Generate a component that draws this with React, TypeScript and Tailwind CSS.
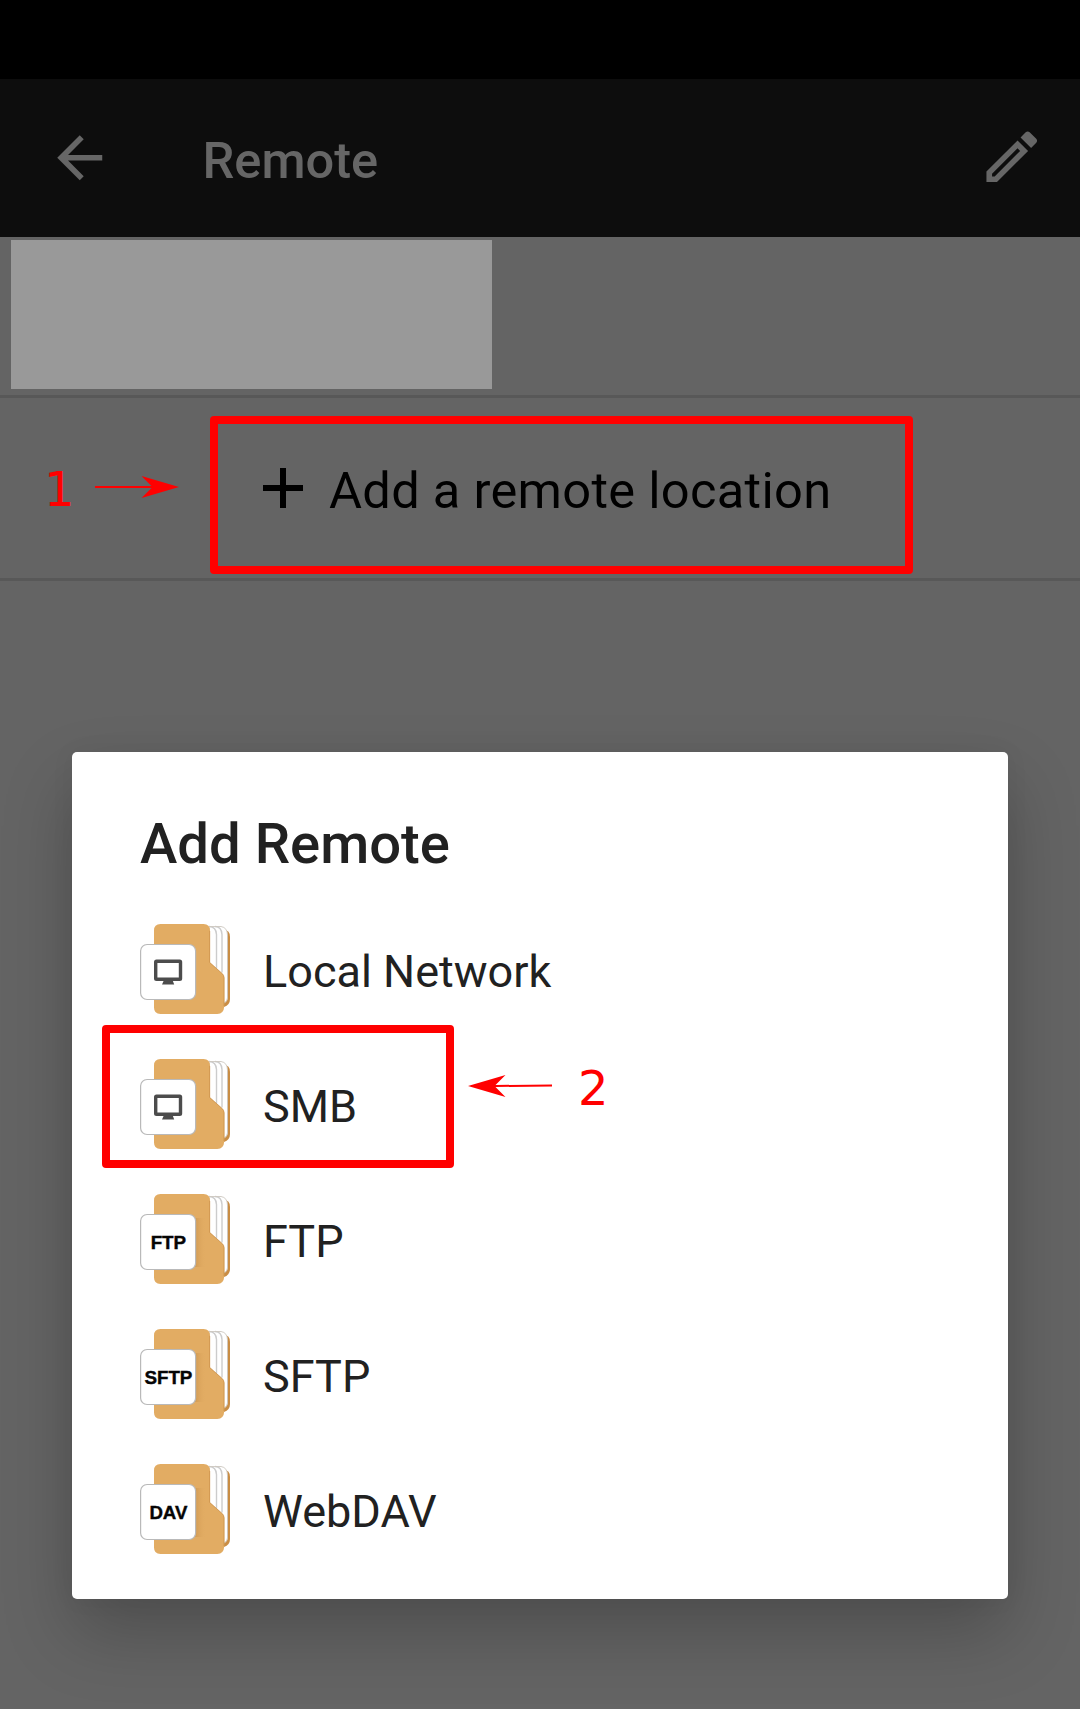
import React from "react";

function FolderIcon({ label }: { label?: string }) {
  const id = label ? "shade-" + label : "shade-screen";
  const width = label === "SFTP" ? 48 : label === "DAV" ? 38 : 35.5;
  return (
    <svg className="block h-[110px] w-[110px] shrink-0" viewBox="0 0 110 110">
      <defs>
        <linearGradient id={id} x1="0" x2="1" y1="0" y2="0">
          <stop offset="0" stopColor="#a86f2c" stopOpacity="0.3" />
          <stop offset="1" stopColor="#e2ac63" stopOpacity="0" />
        </linearGradient>
      </defs>
      <path d="M60 15h34q6 0 6 7v62q0 6-6 8H60z" fill="#c98d44" />
      <path d="M72 11.5h18.500q7 1 7 8V83q0 4-5 6H72z" fill="#fff" />
      <path d="M79 11.500q7 0 7.500 8v34M85 11.500q6.500 0 7 8v38" fill="none" stroke="#cccccc" strokeWidth="1.4" />
      <path d="M79 11.500h12q6.500 1 6.500 9V83q0 3-3.500 5" fill="none" stroke="#cdc7bf" strokeWidth="0.9" />
      <path
        d="M30.500 9H73.500q6.500 0 6.500 6.500V47.500L92.800 59q1.500 1.800 1.500 4V91q-.5 8-7 8H30.500q-6.500 0-6.500-6.500V15.500Q24 9 30.500 9z"
        fill="#e2ac63"
      />
      <path d="M79.700 16V47.500L92.300 58.700q1.700 1.600 1.700 4V91" fill="none" stroke="#cc924c" strokeWidth="0.8" />
      {label && <rect x="65" y="33" width="11" height="49" fill={`url(#${id})`} />}
      <rect x="10.600" y="29.500" width="55" height="55" rx="6.500" fill="#fff" stroke="#b9b9b9" strokeWidth="1.200" />
      {label ? (
        <text
          x={38.400}
          y={64.300}
          textAnchor="middle"
          textLength={width}
          lengthAdjust="spacingAndGlyphs"
          fill="#050505"
          stroke="#050505"
          strokeWidth="0.4"
          className="font-['Liberation_Sans',sans-serif] text-[19px] font-bold"
        >
          {label}
        </text>
      ) : (
        <>
          <rect x="25.700" y="46.200" width="24.800" height="18" rx="0.8" fill="#fff" stroke="#4c4c4c" strokeWidth="3.400" />
          <path d="M34 65h8.500l1.700 4.500H32z" fill="#4c4c4c" />
        </>
      )}
    </svg>
  );
}

const remotes = [
  { name: "Local Network" },
  { name: "SMB" },
  { name: "FTP", badge: "FTP" },
  { name: "SFTP", badge: "SFTP" },
  { name: "WebDAV", badge: "DAV" },
];

export default function App() {
  return (
    <div className="relative flex h-[1709px] w-[1080px] flex-col overflow-hidden bg-[#646464] font-['Roboto',sans-serif]">
      <div className="h-[79px] bg-black" />
      <header className="flex h-[158px] items-center gap-[89px] bg-[#0d0d0d] pr-[35px] pl-[46px] text-[#666666]">
        <svg className="block size-[67.5px]" viewBox="0 0 24 24" fill="currentColor">
          <path d="M20 11H7.830l5.590-5.590L12 4l-8 8 8 8 1.410-1.410L7.830 13H20v-2z" />
        </svg>
        <h1 className="flex-1 pt-[5px] text-[50.6px] leading-[60px] font-medium">Remote</h1>
        <svg className="mb-[3px] block size-[67.5px]" viewBox="0 0 24 24" fill="currentColor">
          <path d="M3 17.250V21h3.750L17.810 9.940l-3.750-3.750L3 17.250zM5.920 19H5v-.92l9.060-9.060.92.92L5.920 19zM20.710 5.630l-2.340-2.340c-.2-.2-.45-.29-.71-.29s-.51.1-.7.29l-1.830 1.830 3.750 3.750 1.830-1.830c.39-.39.39-1.020 0-1.410z" />
        </svg>
      </header>
      <div className="flex h-[161px] items-start border-b-[3px] border-[#585858] pt-[3px] pl-[11px]">
        <div className="h-[149px] w-[480.5px] bg-[#999999]" />
      </div>
      <div className="flex h-[183px] items-center gap-[26px] border-b-[3px] border-[#585858] pl-[263px] text-black">
        <svg className="block size-10" viewBox="0 0 40 40" fill="currentColor">
          <path d="M17 0h6v17h17v6H23v17h-6V23H0v-6h17z" />
        </svg>
        <span className="pt-[5px] text-[50.6px] leading-[60px] tracking-[0.3px] whitespace-nowrap">Add a remote location</span>
      </div>

      <div className="absolute inset-0 flex items-end justify-center pb-[110px]">
        <div className="flex h-[847px] w-[936px] flex-col rounded-[5px] bg-white px-[58px] pt-[57px] text-[#212121] shadow-[0_34px_70px_rgba(0,0,0,0.22),0_0_24px_rgba(0,0,0,0.05)]">
          <h2 className="h-[106px] pl-[10px] text-[56.25px] leading-[70px] font-medium">Add Remote</h2>
          <ul className="flex flex-col">
            {remotes.map((r) => (
              <li key={r.name} className="flex h-[135px] items-start gap-[23px]">
                <FolderIcon label={r.badge} />
                <span className="pt-[27px] text-[45px] leading-[60px] whitespace-nowrap">{r.name}</span>
              </li>
            ))}
          </ul>
        </div>
      </div>

      <div className="absolute top-[416px] left-[210px] h-[158px] w-[703px] rounded-[4px] border-8 border-[#ff0000]" />
      <div className="absolute top-[1025px] left-[101.5px] h-[143px] w-[352px] rounded-[4px] border-8 border-[#ff0000]" />
      <div className="absolute top-[459px] left-[44px] flex items-center gap-[20.5px] text-[#ff0000]">
        <span className="pt-[2px] font-['DejaVu_Sans',sans-serif] text-[48px] leading-[56px]">1</span>
        <svg className="mb-[2px] block h-[24px] w-[84px]" viewBox="0 0 84 24" fill="currentColor">
          <path d="M0 11h56.500L46.500 1 84 12 46.500 23l10-10H0z" />
        </svg>
      </div>
      <div className="absolute top-[1059px] left-[468px] flex items-center gap-[26px] text-[#ff0000]">
        <svg className="mb-[4px] block h-[24px] w-[84px]" viewBox="0 0 84 24" fill="currentColor">
          <path d="M84 10.500L27.500 11l10-10L0 12l37.500 11-10-10L84 12.500z" />
        </svg>
        <span className="pt-px font-['DejaVu_Sans',sans-serif] text-[48px] leading-[56px]">2</span>
      </div>
    </div>
  );
}
